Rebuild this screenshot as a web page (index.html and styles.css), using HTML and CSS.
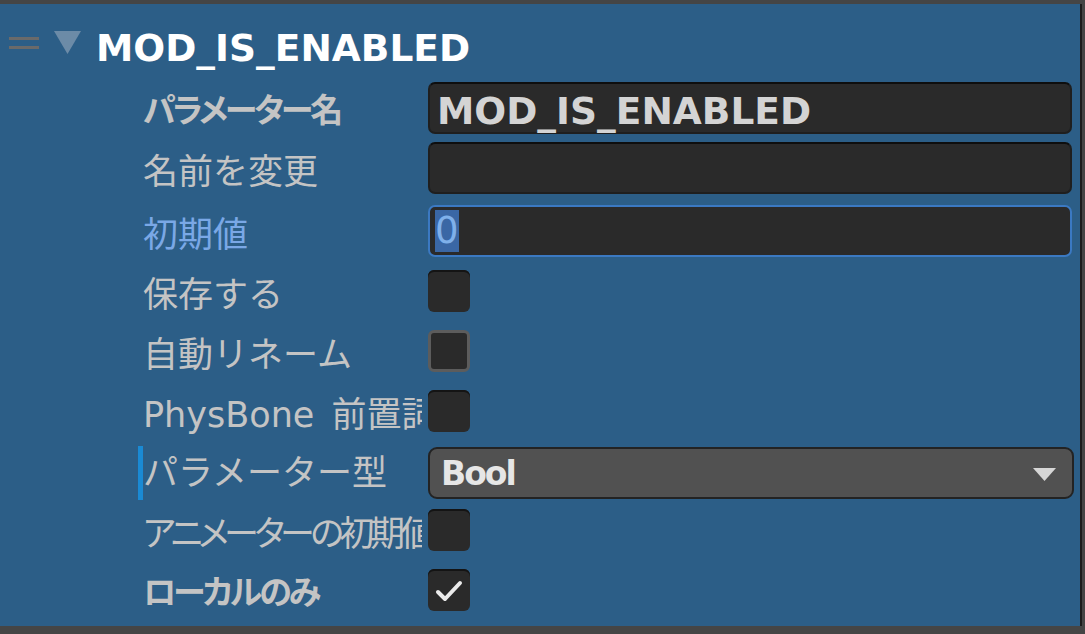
FILE: index.html
```html
<!DOCTYPE html>
<html lang="ja">
<head>
    <meta charset="UTF-8" />
    <title>MOD_IS_ENABLED</title>
    <link rel="stylesheet" href="styles.css">
</head>
<body>

    <div class="panel">
        <div class="header">
            <span class="grip"></span>
            <svg class="fold" width="27" height="23" viewBox="0 0 27 23">
                <polygon points="0,0 27,0 13.5,23" />
            </svg>
            <span class="title">MOD_IS_ENABLED</span>
        </div>

        <div class="rows">
            <div class="row">
                <div class="label bold">パラメーター名</div>
                <div class="text-input">MOD_IS_ENABLED</div>
            </div>
            <div class="row">
                <div class="label">名前を変更</div>
                <div class="text-input"></div>
            </div>
            <div class="row row-focus">
                <div class="label focused">初期値</div>
                <div class="text-input num focus"><span class="sel">0</span></div>
            </div>
            <div class="row">
                <div class="label">保存する</div>
                <div class="checkbox"></div>
            </div>
            <div class="row">
                <div class="label">自動リネーム</div>
                <div class="checkbox hover"></div>
            </div>
            <div class="row">
                <div class="label spaced">PhysBone 前置詞</div>
                <div class="checkbox"></div>
            </div>
            <div class="row row-drop">
                <div class="label active">パラメーター型</div>
                <div class="dropdown">
                    <span>Bool</span>
                    <svg class="caret" width="23" height="13" viewBox="0 0 23 13">
                        <polygon points="0,0 23,0 11.5,13" />
                    </svg>
                </div>
            </div>
            <div class="row row-after">
                <div class="label tight">アニメーターの初期値</div>
                <div class="checkbox"></div>
            </div>
            <div class="row">
                <div class="label bold">ローカルのみ</div>
                <div class="checkbox">
                    <svg width="42" height="42" viewBox="0 0 42 42">
                        <polyline points="10,23 17,30 32,14" />
                    </svg>
                </div>
            </div>
        </div>
    </div>

</body>
</html>
```

FILE: styles.css
```css
body {
    background-color: #454545;
    margin: 0;
    padding: 4px 0 0 0;
    font-family: 'DejaVu Sans', 'Noto Sans CJK JP', sans-serif;
    overflow: hidden;
    height: 630px;
    box-sizing: border-box;
}

.panel {
    width: 1080px;
    height: 622px;
    background-color: #2c5e87;
    border-right: 2px solid #1c1c1c;
}

/* Başlık satırı */
.header {
    display: flex;
    align-items: flex-start;
    height: 44px;
    padding-top: 22px;
    margin-bottom: 8px;
}

.grip {
    width: 30px;
    height: 12px;
    margin: 11px 0 0 9px;
    border-top: 3px solid #6a6a6a;
    border-bottom: 3px solid #6a6a6a;
    box-sizing: border-box;
}

.fold {
    margin: 5px 0 0 15px;
    fill: #6c8ba7;
}

.title {
    margin-left: 15px;
    color: #ffffff;
    font-weight: bold;
    font-size: 37.5px;
    line-height: 44px;
}

/* Alan satırları */
.rows {
    padding-left: 143px;
    padding-right: 8px;
}

.row {
    display: grid;
    grid-template-columns: 279px 1fr;
    column-gap: 6px;
    align-items: center;
    height: 60px;
}

.row-focus {
    margin-top: 3px;
}

.row-drop {
    margin-top: 2px;
}

.row-after {
    margin-top: -3px;
}

.label {
    color: #c4c4c4;
    font-size: 35px;
    white-space: nowrap;
    overflow: hidden;
}

.label.bold {
    font-weight: bold;
    font-size: 33px;
    font-feature-settings: "palt";
    letter-spacing: -3px;
}

.label.spaced {
    word-spacing: 6px;
}

.label.tight {
    font-feature-settings: "palt";
    letter-spacing: -4.5px;
}

.label.focused {
    color: #7aa8e6;
}

.label.active {
    margin-left: -5px;
    border-left: 5px solid #1a8ad4;
    height: 54px;
    line-height: 54px;
}

.text-input {
    height: 52px;
    box-sizing: border-box;
    background-color: #2a2a2a;
    border: 2px solid #1f1f1f;
    border-top-color: #0e0e0e;
    border-radius: 7px;
    padding: 6px 0 0 7px;
    color: #d4d4d4;
    font-weight: bold;
    font-size: 37.5px;
    line-height: 42px;
    white-space: nowrap;
}

.text-input.focus {
    border-color: #3b79c2;
}

.text-input.num {
    font-weight: normal;
    padding: 3px 0 0 5px;
}

.sel {
    display: inline-block;
    background-color: #3a67a5;
    color: #7fb0ea;
    height: 42px;
    line-height: 42px;
    vertical-align: top;
    font-size: 37px;
}

.checkbox {
    width: 42px;
    height: 42px;
    box-sizing: border-box;
    background-color: #2a2a2a;
    border-radius: 6px;
    box-shadow: inset 0 2px 0 #141414;
}

.checkbox.hover {
    border: 3px solid #5c5c5c;
    box-shadow: none;
}

.checkbox svg {
    display: block;
    fill: none;
    stroke: #ebebeb;
    stroke-width: 4;
    stroke-linecap: round;
    stroke-linejoin: round;
}

.dropdown {
    display: flex;
    align-items: center;
    justify-content: space-between;
    height: 52px;
    margin-right: -2px;
    box-sizing: border-box;
    background-color: #515151;
    border: 2px solid #232323;
    border-radius: 9px;
    padding: 0 16px 0 11px;
    color: #e6e6e6;
    font-weight: bold;
    font-size: 33px;
    letter-spacing: -2px;
}

.caret {
    fill: #d6d6d6;
    margin-top: 2px;
}
```
